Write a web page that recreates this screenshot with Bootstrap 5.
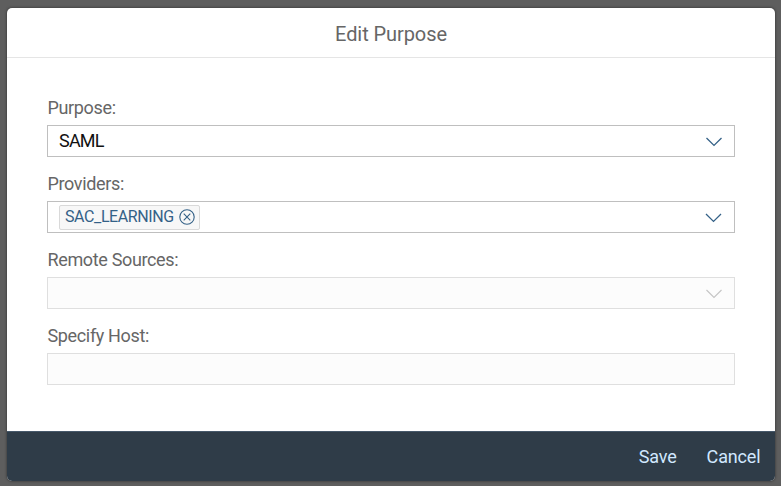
<!DOCTYPE html>
<html lang="en">
<head>
<meta charset="utf-8">
<meta name="viewport" content="width=device-width, initial-scale=1">
<title>Edit Purpose</title>
<link href="https://cdn.jsdelivr.net/npm/bootstrap@5.3.0/dist/css/bootstrap.min.css" rel="stylesheet">
<style>
body { background: #5e5e5e; font-family: Roboto, "Liberation Sans", sans-serif; height: 486px; padding: 8px 6px 5px 7px; color: #666; }
.dialog { height: 473px; border-radius: 5px; box-shadow: 0 0 3px rgba(0,0,0,.55); }
.dialog-head { height: 50px; border-bottom: 1px solid #e5e5e5; padding-top: 2px; }
.dialog-title { font-size: 20px; line-height: 24px; color: #666; letter-spacing: -.08px; }
.dialog-main { padding: 38px 40px 0; }
.field-row { height: 76px; }
.field-label { display: block; width: max-content; font-size: 18px; line-height: 24px; height: 29px; letter-spacing: -.35px; padding-left: .5px; }
.field-box { height: 32px; border: 1px solid #bfbfbf; background: #fff; color: #111; font-size: 18px; padding: 0 11px; }
.field-box.is-off { border-color: #dfdfdf; background: #fcfcfc; }
.field-value { letter-spacing: -.8px; line-height: 24px; }
.chev { width: 18px; height: 12px; fill: none; stroke: #346187; stroke-width: 1.3; }
.is-off .chev { stroke: #c4c4c4; stroke-width: 1.1; }
.token { height: 25px; width: 141px; border: 1px solid #d9d9d9; border-radius: 2px; background: #f7f7f7; color: #346187; font-size: 16px; line-height: 22px; letter-spacing: -.4px; padding: 0 4px 0 5px; }
.token svg { width: 16px; height: 16px; fill: none; stroke: #346187; stroke-width: 1.1; }
.dialog-foot { height: 50px; background: #2f3c48; border-top: 1px solid #46586a; border-radius: 0 0 5px 5px; padding-right: 14.5px; gap: 30px; }
.foot-btn { color: #d1e8ff; font-size: 18px; line-height: 24px; letter-spacing: -.15px; }
.foot-btn:hover { color: #fff; }
</style>
</head>
<body class="overflow-hidden">
<div class="dialog bg-white d-flex flex-column" role="dialog" aria-labelledby="title">
  <header class="dialog-head d-flex align-items-center justify-content-center">
    <h1 class="dialog-title fw-normal m-0" id="title">Edit Purpose</h1>
  </header>
  <main class="dialog-main flex-grow-1">
    <div class="field-row">
      <label class="field-label">Purpose:</label>
      <div class="field-box d-flex align-items-center justify-content-between">
        <span class="field-value">SAML</span>
        <svg class="chev" viewBox="0 0 18 12"><path d="M1.5 3 9 10.4 16.5 3"/></svg>
      </div>
    </div>
    <div class="field-row">
      <label class="field-label">Providers:</label>
      <div class="field-box d-flex align-items-center justify-content-between">
        <span class="token d-flex align-items-center justify-content-between"><span>SAC_LEARNING</span>
          <svg viewBox="0 0 16 16"><circle cx="8" cy="8" r="7.2"/><path d="m4.7 4.7 6.6 6.6m0-6.6-6.6 6.6"/></svg>
        </span>
        <svg class="chev" viewBox="0 0 18 12"><path d="M1 3 8.5 10.4 16 3"/></svg>
      </div>
    </div>
    <div class="field-row">
      <label class="field-label">Remote Sources:</label>
      <div class="field-box is-off d-flex align-items-center justify-content-end">
        <svg class="chev" viewBox="0 0 18 12"><path d="M1.5 3 9 10.4 16.5 3"/></svg>
      </div>
    </div>
    <div class="field-row">
      <label class="field-label">Specify Host:</label>
      <div class="field-box is-off"></div>
    </div>
  </main>
  <footer class="dialog-foot d-flex align-items-center justify-content-end">
    <button class="foot-btn btn btn-link border-0 p-0 text-decoration-none" type="button">Save</button>
    <button class="foot-btn btn btn-link border-0 p-0 text-decoration-none" type="button">Cancel</button>
  </footer>
</div>
<script src="https://cdn.jsdelivr.net/npm/bootstrap@5.3.0/dist/js/bootstrap.bundle.min.js"></script>
</body>
</html>
